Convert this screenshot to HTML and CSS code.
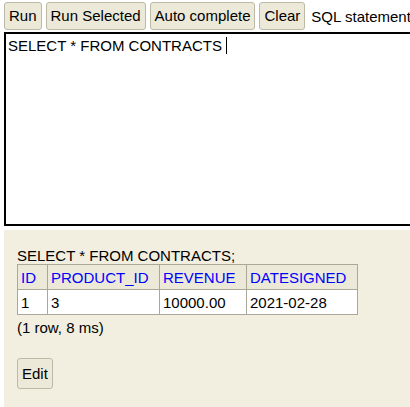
FILE: index.html
```html
<!DOCTYPE html>
<html>
<head>
<meta charset="utf-8">
<link rel="stylesheet" href="styles.css">
</head>
<body>
<div class="page">
  <div class="toolbar">
    <button class="btn">Run</button>
    <button class="btn">Run Selected</button>
    <button class="btn">Auto complete</button>
    <button class="btn">Clear</button>
    <span class="label">SQL statement:</span>
  </div>
  <div class="editor">SELECT * FROM CONTRACTS <span class="caret"></span></div>
  <div class="result">
    <div class="stmt">SELECT * FROM CONTRACTS;</div>
    <table class="grid">
      <tr><th>ID</th><th class="c2">PRODUCT_ID</th><th class="c3">REVENUE</th><th class="c4">DATESIGNED</th></tr>
      <tr><td>1</td><td>3</td><td>10000.00</td><td>2021-02-28</td></tr>
    </table>
    <div class="info">(1 row, 8 ms)</div>
    <button class="btn edit">Edit</button>
  </div>
</div>
</body>
</html>
```
FILE: styles.css
```css
html, body {
  margin: 0;
  padding: 0;
  background: #ffffff;
  overflow: hidden;
  width: 410px;
  height: 407px;
}
.page {
  padding: 2px 0 0 4px;
  font-family: "Liberation Sans", Arial, sans-serif;
  font-size: 15px;
  color: #000;
}
.toolbar {
  display: flex;
  align-items: center;
  gap: 4px;
  height: 28px;
  white-space: nowrap;
  overflow: hidden;
}
.btn {
  font-family: "Liberation Sans", Arial, sans-serif;
  font-size: 15px;
  color: #000;
  background: #ece9d8;
  border: 1px solid #bdb9a6;
  border-radius: 3px;
  height: 28px;
  padding: 0 4px;
  margin: 0;
  line-height: 26px;
}
.label {
  margin-left: 2px;
  white-space: nowrap;
}
.editor {
  margin-top: 2px;
  width: 420px;
  border: 2px solid #000;
  padding: 3px 2px 0 2px;
  line-height: 17px;
  white-space: pre;
  box-sizing: content-box;
  height: 187px;
}
.caret {
  display: inline-block;
  width: 1px;
  height: 17px;
  background: #000;
  vertical-align: top;
}
.result {
  margin-top: 4px;
  background: #f2efe0;
  height: 177px;
  padding: 17px 0 0 13px;
  box-sizing: border-box;
}
.stmt {
  line-height: 17px;
}
.grid {
  border-collapse: collapse;
  margin: 0;
}
.grid th, .grid td {
  border: 1px solid #aca899;
  height: 24px;
  padding: 0 3px;
  text-align: left;
  font-weight: normal;
  line-height: 17px;
  white-space: nowrap;
}
.grid th {
  background: #ece9d8;
  color: #0000ff;
}
.grid td {
  background: #ffffff;
}
.grid th:first-child { width: 23px; }
.grid .c2 { width: 105px; }
.grid .c3 { width: 80px; }
.grid .c4 { width: 104px; }
.info {
  margin-top: 4px;
  line-height: 17px;
}
.edit {
  margin-top: 22px;
  height: 31px;
  line-height: 29px;
}
```
